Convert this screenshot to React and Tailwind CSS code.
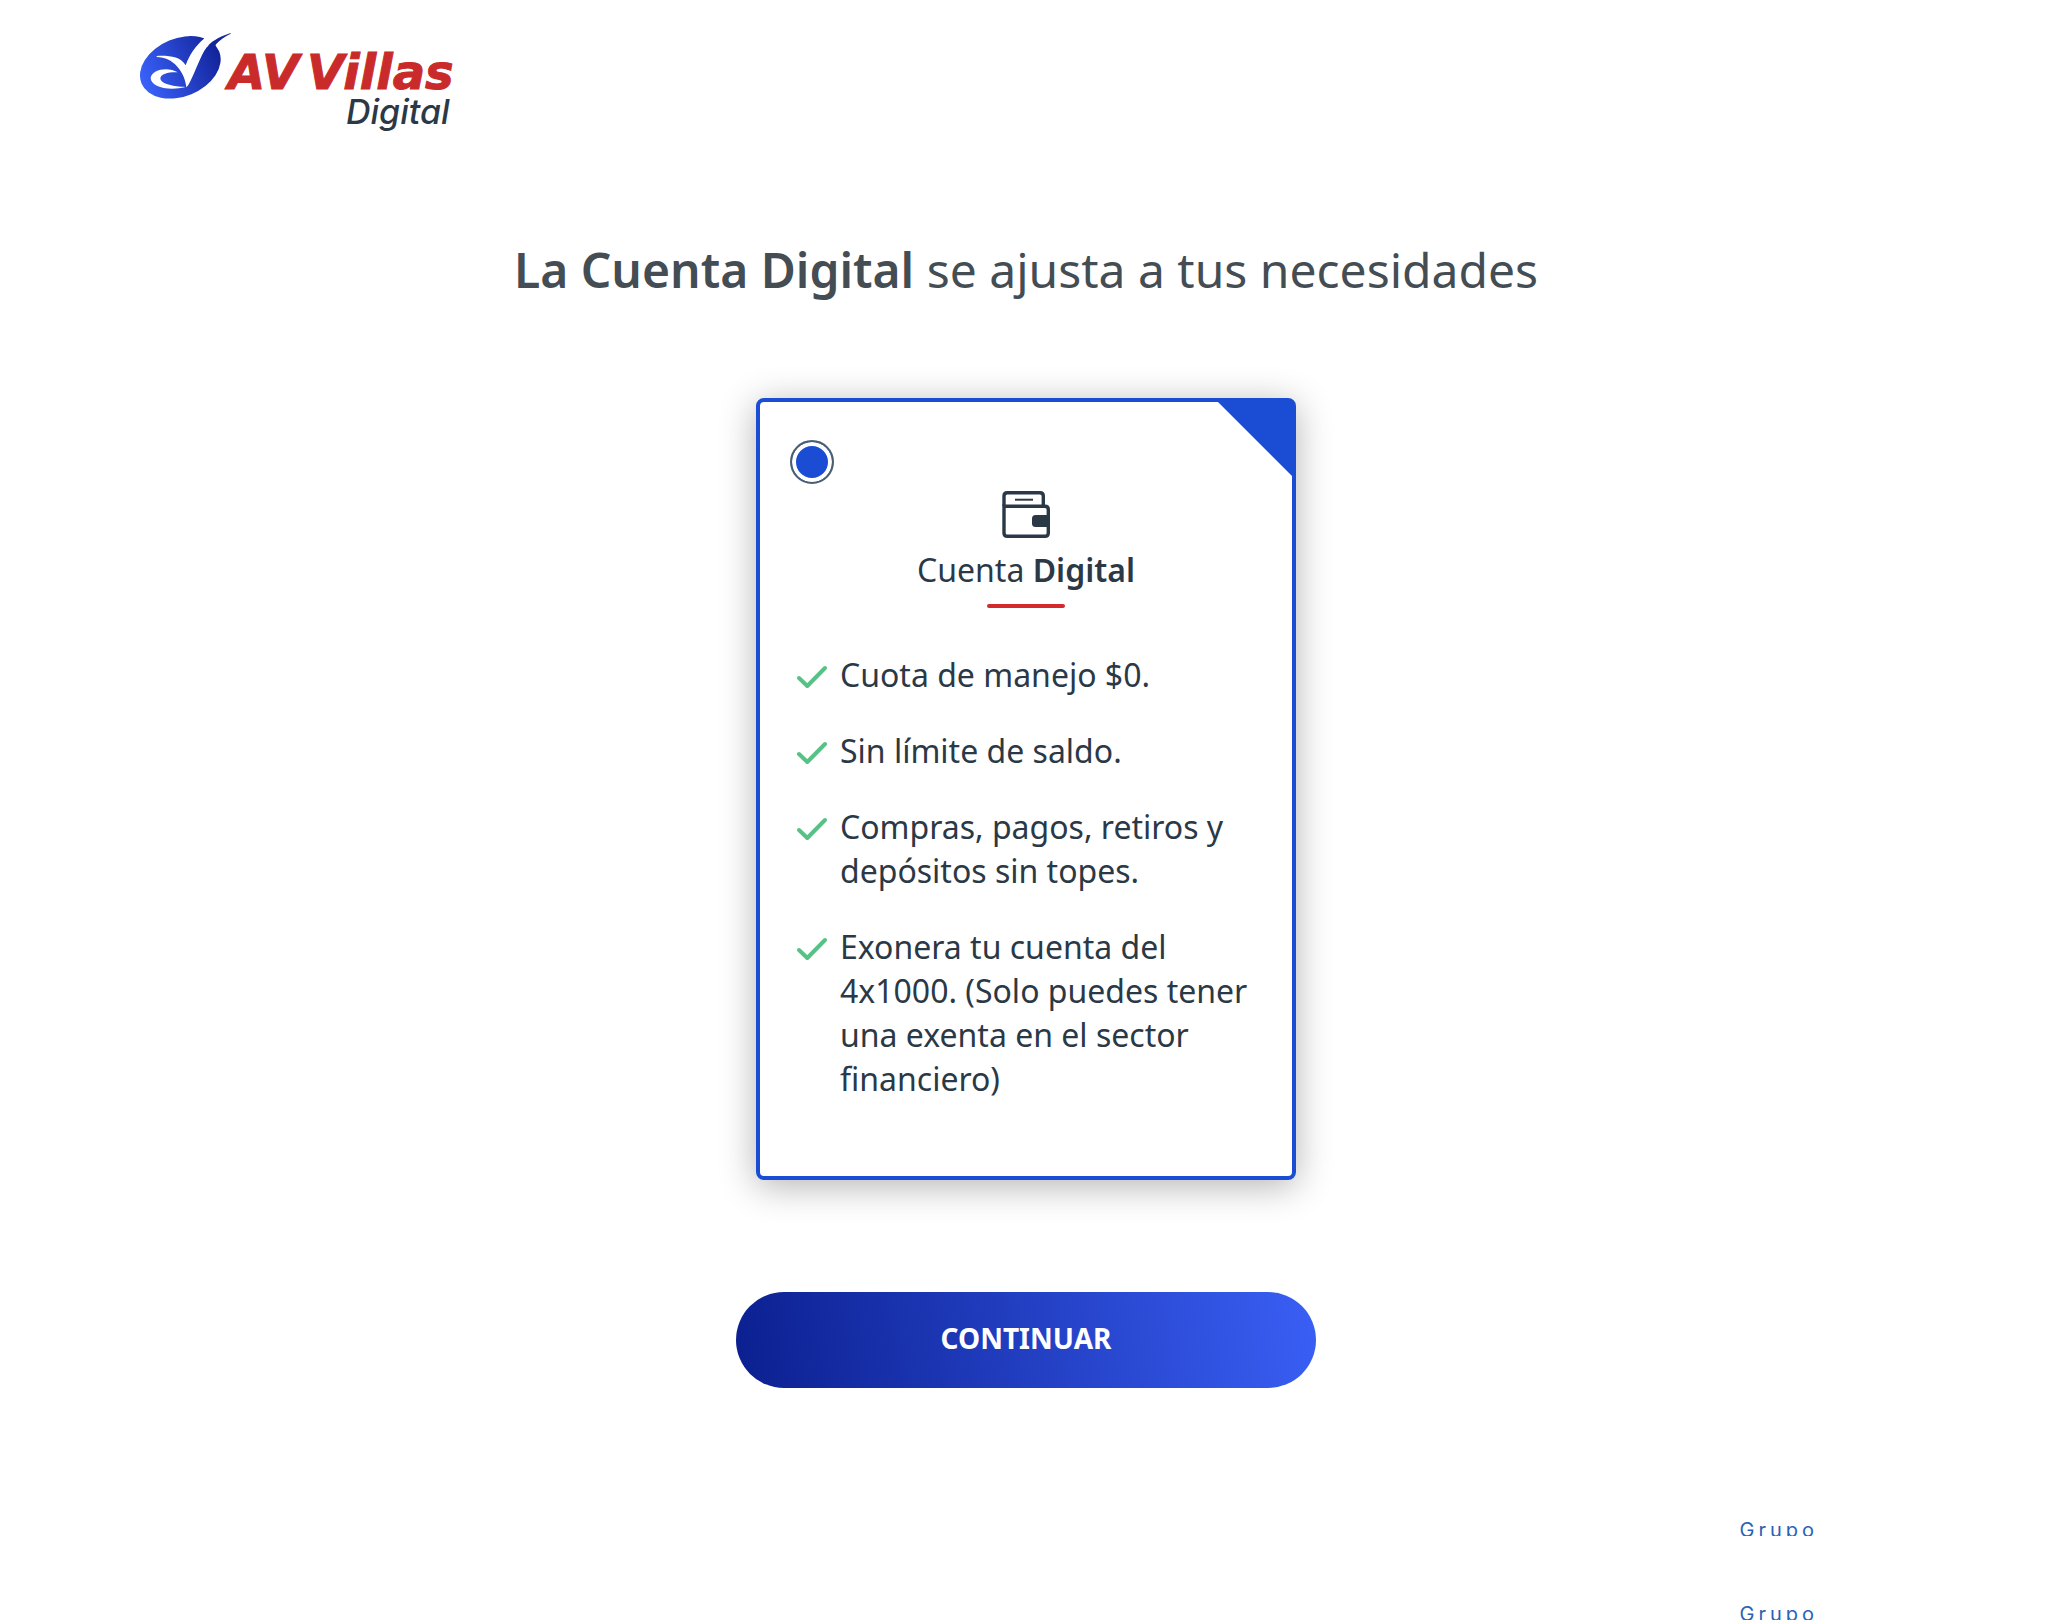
import React from "react";

const benefits = [
  "Cuota de manejo $0.",
  "Sin límite de saldo.",
  "Compras, pagos, retiros y depósitos sin topes.",
  "Exonera tu cuenta del 4x1000. (Solo puedes tener una exenta en el sector financiero)",
];

function LogoMark() {
  return (
    <svg viewBox="12 12 276 204" className="h-[68px] w-[92px] shrink-0" aria-hidden="true">
      <defs>
        <linearGradient id="mark" x1="0" y1="0.5" x2="1" y2="0.5">
          <stop offset="0" stopColor="#3a62fb" />
          <stop offset="1" stopColor="#12239a" />
        </linearGradient>
      </defs>
      <ellipse cx="133" cy="118" rx="126" ry="87" transform="rotate(-22.5 133 118)" fill="url(#mark)" />
      <path
        d="M62 84 C92 82 134 84 149 112 C160 80 180 52 204 32 L208 12 H284 V16 C250 30 222 42 205 68 C188 98 176 136 157 171 L151 178 C149 156 140 134 124 116 C106 96 88 88 62 87 Z"
        fill="#fff"
      />
      <path
        d="M125 133 C96 116 48 124 44 150 C44 176 96 190 149 177 C112 176 74 168 73 151 C75 137 98 132 125 133 Z"
        fill="#fff"
      />
      <path d="M284 15 C256 24 232 36 217 52 L232 68 L240 49 C252 36 266 26 284 17 Z" fill="#15269c" />
    </svg>
  );
}

function WalletIcon() {
  return (
    <svg viewBox="0 0 48 48" className="size-12" fill="none" stroke="#2b3947" strokeWidth="3.4" aria-hidden="true">
      <path d="M2 16 V6 Q2 2.7 5.300 2.7 H38 Q41.300 2.7 41.300 6 V16" />
      <path d="M2 16.300 H43 Q46.300 16.300 46.300 19.600 V43 Q46.300 46.300 43 46.300 H5.300 Q2 46.300 2 43 Z" />
      <path d="M13 9.700 H31" strokeWidth="2" />
      <path d="M46 25 H33.500 Q30 25 30 28.500 V33.500 Q30 37 33.500 37 H46 Z" fill="#2b3947" stroke="none" />
    </svg>
  );
}

function CheckIcon() {
  return (
    <svg
      viewBox="0 0 32 24"
      className="mt-3 h-6 w-8 shrink-0"
      fill="none"
      stroke="#57c285"
      strokeWidth="4"
      strokeLinecap="round"
      strokeLinejoin="round"
      aria-hidden="true"
    >
      <path d="M3 13 L11.300 21 L29 3" />
    </svg>
  );
}

function GroupMark() {
  return (
    <div className="h-5 overflow-hidden font-['Inter',sans-serif] text-[20px] leading-7 tracking-[0.2em] text-[#2a62b5]">
      Grupo
    </div>
  );
}

export default function App() {
  return (
    <div className="flex min-h-screen flex-col bg-white font-['Noto_Sans',sans-serif] text-[#2b3947]">
      <header className="px-6 pt-8 md:px-35">
        <a href="#" className="inline-flex h-26 items-start" aria-label="AV Villas Digital">
          <LogoMark />
          <span className="-ml-1 flex flex-col items-end pt-4">
            <span className="flex gap-2 font-['DejaVu_Sans',sans-serif] text-[48px] leading-12 font-bold text-[#c92a2a] italic [-webkit-text-stroke:1px_#c92a2a]">
              <span>AV</span>
              <span>Villas</span>
            </span>
            <span className="mr-1 font-['Inter',sans-serif] text-[34px] leading-8 font-medium italic">Digital</span>
          </span>
        </a>
      </header>

      <main className="flex flex-1 flex-col items-center px-6 pt-[102px]">
        <h1 className="text-center text-[48px] leading-16 text-[#444d54]">
          <strong className="font-semibold">La Cuenta Digital</strong> se ajusta a tus necesidades
        </h1>

        <label className="relative mt-24 block w-full max-w-[540px] cursor-pointer rounded-lg border-4 border-[#1a4dd3] bg-white px-[30px] pt-[38px] pb-[75px] shadow-[0_6px_36px_rgba(0,0,0,0.3)]">
          <span className="absolute top-0 right-0 size-[74px] bg-[#1a4dd3] [clip-path:polygon(0_0,100%_0,100%_100%)]" />
          <input
            type="radio"
            name="cuenta"
            defaultChecked
            className="block size-11 cursor-pointer appearance-none rounded-full border-2 border-[#4b5f70] bg-[#1a4dd3] shadow-[inset_0_0_0_4px_#fff]"
          />
          <span className="mt-[6px] flex flex-col items-center">
            <WalletIcon />
            <span className="mt-[10px] text-[32px] leading-11">
              Cuenta <strong className="font-semibold">Digital</strong>
            </span>
            <span className="mt-3 h-1 w-[78px] rounded-full bg-[#d32b2b]" />
          </span>
          <ul className="mt-[45px] flex flex-col gap-8 pl-[6px]">
            {benefits.map((text) => (
              <li key={text} className="flex gap-3 text-[32px] leading-11">
                <CheckIcon />
                <span>{text}</span>
              </li>
            ))}
          </ul>
        </label>

        <button
          type="button"
          className="mt-28 h-24 w-full max-w-[580px] cursor-pointer rounded-full bg-linear-[80deg,#0b1f8f,#3a5ff5] pb-1 text-[28px] font-bold text-white"
        >
          CONTINUAR
        </button>
      </main>

      <footer className="mt-32 flex flex-col items-end gap-16 pr-[234px]">
        <GroupMark />
        <GroupMark />
      </footer>
    </div>
  );
}
